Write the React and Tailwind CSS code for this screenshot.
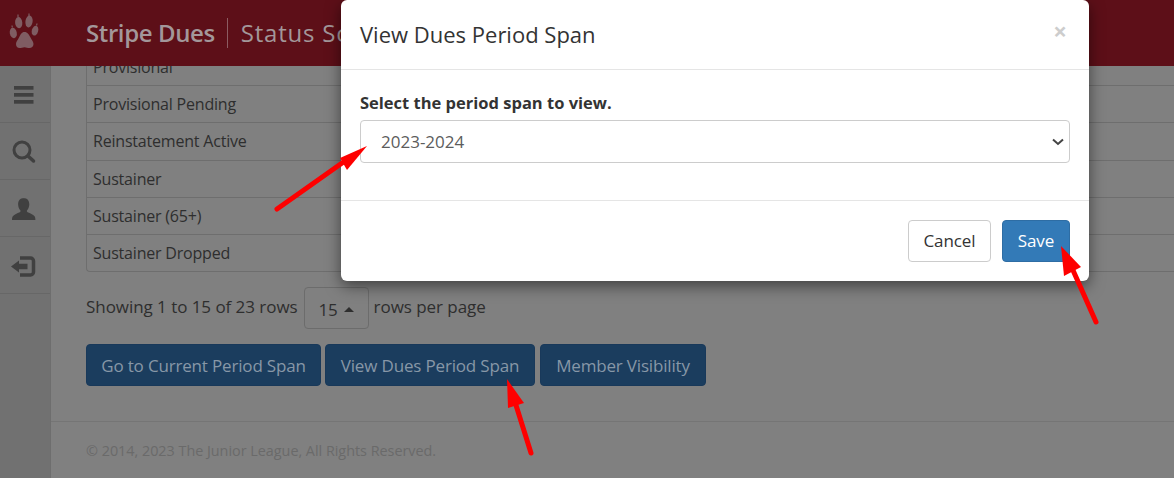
const font = { fontFamily: '"Open Sans", "Noto Sans", sans-serif' };

const rows = ["Provisional", "Provisional Pending", "Reinstatement Active", "Sustainer", "Sustainer (65+)", "Sustainer Dropped"];

function Paw() {
  return (
    <svg width="51" height="66" viewBox="0 0 51 66" fill="#7f5c62">
      <ellipse cx="13.300" cy="33" rx="3.500" ry="5.300" transform="rotate(-10 13.300 33)" />
      <ellipse cx="18.700" cy="22.700" rx="3.600" ry="5.600" transform="rotate(-5 18.700 22.700)" />
      <ellipse cx="29" cy="21.500" rx="3.600" ry="6" transform="rotate(8 29 21.500)" />
      <ellipse cx="35" cy="30.700" rx="3.200" ry="5" transform="rotate(15 35 30.700)" />
      <path d="M24.500 32c3 0 4.500 2.500 6 5.500 1.500 2.800 3 4.500 3 6.500 0 2.500-2 4-4 4-1.800 0-3.200-.8-5-.8s-3.200.8-5 .8c-2 0-3.500-1.500-3.500-4 0-2 1.500-3.700 3-6.500 1.500-3 2.500-5.500 5.500-5.500z" />
      <path d="M12 25.500l.3 2M18 14.500v2.500M29 13.500v2.500M37 23.500l-.4 2" stroke="#7f5c62" strokeWidth="1.200" />
    </svg>
  );
}

function SideIcon({ children }) {
  return (
    <div className="h-[57px] border-b border-[#676767]">
      <svg width="50" height="56" viewBox="0 0 50 56" fill="#404040" className="block">{children}</svg>
    </div>
  );
}

function Arrow({ shaft, head }) {
  return (
    <>
      <line x1={shaft[0]} y1={shaft[1]} x2={shaft[2]} y2={shaft[3]} stroke="#fe0000" strokeWidth="5" strokeLinecap="round" />
      <polygon points={head} fill="#fe0000" />
    </>
  );
}

export default function App() {
  return (
    <div style={font} className="relative h-[478px] w-[1174px] overflow-hidden bg-[#808080] text-[#2e2e2e]">
      <header className="h-[66px] bg-[#5d0f18] flex items-center relative z-10">
        <div className="w-[51px] shrink-0"><Paw /></div>
        <div className="ml-[35px] flex items-center h-[30px]">
          <span className="text-[24px] font-semibold text-[#a3979a] tracking-[-0.4px] pr-[12px] border-r border-[#8c5c62] leading-[30px]">Stripe Dues</span>
          <span className="text-[24px] text-[#a3979a] tracking-[0.8px] pl-[13px] whitespace-nowrap">Status Sc</span>
        </div>
      </header>
      <div className="flex h-[412px]">
        <aside className="w-[51px] shrink-0 h-full bg-[#717171] border-r border-[#6e6e6e]">
          <SideIcon>
            <rect x="14" y="20" width="19.500" height="3.700" />
            <rect x="14" y="27" width="19.500" height="3.700" />
            <rect x="14" y="34" width="19.500" height="3.700" />
          </SideIcon>
          <SideIcon>
            <circle cx="22" cy="27" r="8" fill="none" stroke="#404040" strokeWidth="3" />
            <line x1="28" y1="33" x2="33.500" y2="38" stroke="#404040" strokeWidth="3.500" strokeLinecap="round" />
          </SideIcon>
          <SideIcon>
            <path d="M23.500 18c3.800 0 5.800 2.800 5.800 6.300 0 2.600-1 4.700-2.200 6 -.5.7-.3 1.500.5 1.900 2.700 1.200 5.300 2 7 4 .5.800.8 2.200.8 3.800H12c0-1.600.3-3 .8-3.800 1.700-2 4.300-2.800 7-4 .8-.4 1-1.200.5-1.900-1.200-1.300-2.200-3.400-2.200-6 0-3.500 2-6.300 5.900-6.300z" />
          </SideIcon>
          <SideIcon>
            <path d="M20 21h10.500a3 3 0 0 1 3 3v11a3 3 0 0 1-3 3H20" fill="none" stroke="#404040" strokeWidth="3.500" />
            <polygon points="11,29.500 19,23.500 19,26.800 27.500,26.800 27.500,32.200 19,32.200 19,35.500" />
          </SideIcon>
        </aside>
        <main className="flex-1 min-w-0 flex flex-col">
          <div className="pl-[35px] h-[355px]">
            <div className="-mt-[18px] w-[1200px] border-l border-b border-[#6e6e6e] rounded-bl-[4px]">
              {rows.map((r, i) => (
                <div key={r} className={`h-[37.2px] pl-[6px] flex items-center text-[16px] tracking-[-0.2px] ${i ? "border-t border-[#6e6e6e]" : ""}`}>{r}</div>
              ))}
            </div>
            <div className="mt-[15px] flex items-center text-[17px] tracking-[-0.05px] h-[42px]">
              <span className="-mt-[3px]">Showing 1 to 15 of 23 rows</span>
              <span className="ml-[6px] w-[65px] h-[42px] rounded-[4px] border border-[#6c6c6c] flex items-center justify-center gap-[6px] pt-[3px]">
                15<span className="w-0 h-0 border-x-[5px] border-x-transparent border-b-[5px] border-b-[#2e2e2e]" />
              </span>
              <span className="ml-[5px] -mt-[3px]">rows per page</span>
            </div>
            <div className="mt-[15px] flex gap-[4px] text-[#8797a7] text-[17px] tracking-[-0.17px]">
              <button className="h-[42px] w-[235px] pt-[2px] rounded-[4px] bg-[#1b3d5e] border border-[#19395a]">Go to Current Period Span</button>
              <button className="h-[42px] w-[210px] pt-[2px] rounded-[4px] bg-[#1b3d5e] border border-[#19395a]">View Dues Period Span</button>
              <button className="h-[42px] w-[166px] pt-[2px] ml-[1px] rounded-[4px] bg-[#1b3d5e] border border-[#19395a]">Member Visibility</button>
            </div>
          </div>
          <footer className="border-t border-[#757575] pl-[35px] pt-[18px] text-[14.400px] tracking-[-0.02px] text-[#6a6a6a]">© 2014, 2023 The Junior League, All Rights Reserved.</footer>
        </main>
      </div>

      <div className="absolute z-20 left-[341px] top-0 w-[748px] h-[281px] bg-white rounded-[6px] shadow-[0_5px_15px_rgba(0,0,0,0.5)] flex flex-col">
        <div className="h-[70px] border-b border-[#e5e5e5] pl-[19px] pr-[22px] flex items-center justify-between">
          <h4 className="text-[22px] text-[#333] -mt-[1px]">View Dues Period Span</h4>
          <span className="text-[#cdcdcd] text-[24px] font-bold -mt-[8px] leading-none">×</span>
        </div>
        <div className="h-[131px] border-b border-[#e5e5e5] px-[19px] pt-[21px]">
          <label className="block text-[16.500px] font-bold text-[#333] leading-[24px]">Select the period span to view.</label>
          <div className="relative mt-[5px]">
            <select style={font} defaultValue="2023-2024" className="appearance-none w-full h-[43px] pt-[1px] rounded-[4px] border border-[#ccc] bg-white pl-[20px] text-[17px] text-[#5c5c5c]">
              <option>2023-2024</option>
            </select>
            <svg className="absolute right-[6px] top-[18px]" width="12" height="8" viewBox="0 0 12 8" fill="none" stroke="#444" strokeWidth="2"><path d="M1 1.500l5 4.500 5-4.500" /></svg>
          </div>
        </div>
        <div className="flex-1 flex justify-end items-start gap-[11px] pt-[19px] pr-[19px] text-[17px] tracking-[-0.1px]">
          <button className="w-[83px] h-[42px] rounded-[4px] border border-[#ccc] text-[#333] bg-white">Cancel</button>
          <button className="w-[68px] h-[42px] rounded-[4px] border border-[#2e6da4] text-white bg-[#337ab7]">Save</button>
        </div>
      </div>

      <svg className="absolute inset-0 z-30 pointer-events-none" width="1174" height="478">
        <Arrow shaft={[277, 209, 352, 156]} head="367,146 340,158 347,170" />
        <Arrow shaft={[1096, 322, 1072, 268]} head="1061,246 1064,276 1081,267" />
        <Arrow shaft={[531, 453, 515, 402]} head="507,379 508,408 524,403" />
      </svg>
    </div>
  );
}
